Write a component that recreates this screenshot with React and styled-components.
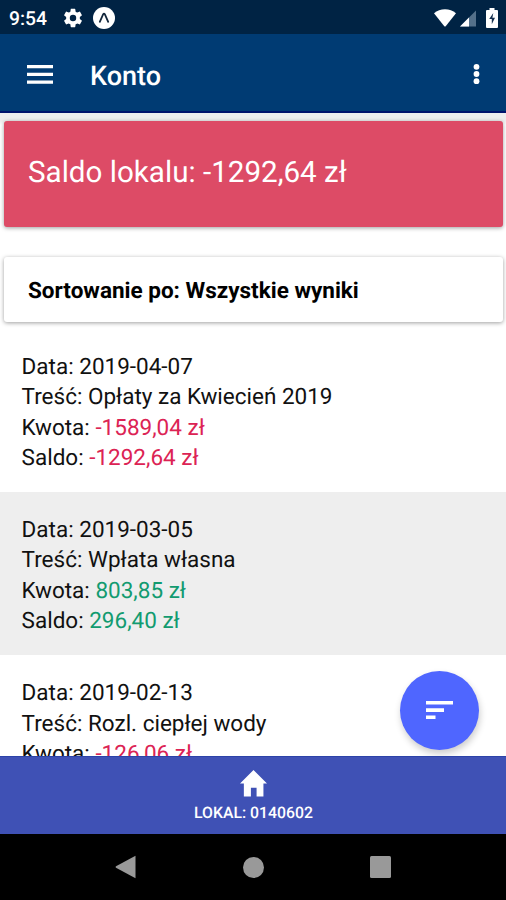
import React from "react";
import styled, { createGlobalStyle } from "styled-components";

const GlobalStyle = createGlobalStyle`
  * { box-sizing: border-box; }
  body { margin: 0; background: #fff; }
`;

const Screen = styled.div`
  display: flex;
  flex-direction: column;
  width: 506px;
  height: 900px;
  overflow: hidden;
  background: #fff;
  color: #111;
  font-family: Roboto, sans-serif;
  text-rendering: geometricPrecision;
`;

const StatusBar = styled.header`
  display: flex;
  align-items: center;
  flex: 0 0 34px;
  padding: 1px 8px 0 9px;
  background: #002344;
  color: #fff;
`;

const Clock = styled.span`
  width: 53px;
  padding-top: 2px;
  font-size: 19.3px;
  font-weight: 500;
  line-height: 30px;
`;

const StatusIcons = styled.div`
  display: flex;
  align-items: center;
  gap: ${(p) => p.$gap}px;
  margin-left: ${(p) => (p.$end ? "auto" : "0")};
`;

const AppBar = styled.div`
  display: flex;
  align-items: center;
  flex: 0 0 79px;
  padding: 3px 26px 0 27px;
  background: #003b73;
  border-bottom: 2px solid #00146c;
  color: #fff;
`;

const Title = styled.h1`
  flex: 1;
  margin: 4px 0 0 37px;
  font-size: 27px;
  font-weight: 500;
  line-height: 32px;
`;

const Content = styled.main`
  position: relative;
  flex: 1;
  min-height: 0;
  overflow: hidden;
  padding-top: 8px;
  background: linear-gradient(#eeeeee 8px, #fff 12px);
`;

const Card = styled.section`
  display: flex;
  align-items: center;
  margin: 0 3px 0 4px;
  padding-left: 24px;
  border-radius: 3px;
  box-shadow: 0 1px 4px rgba(0, 0, 0, 0.38);
`;

const BalanceCard = styled(Card)`
  height: 106px;
  padding-bottom: 2px;
  background: #dd4b66;
  color: #fff;
  font-size: 29.6px;
`;

const SortCard = styled(Card)`
  height: 65px;
  margin-top: 30px;
  padding-top: 2px;
  background: #fff;
  color: #000;
  font-size: 22.5px;
  font-weight: 700;
`;

const List = styled.ul`
  margin: 7px 0 0;
  padding: 0;
  list-style: none;
`;

const Entry = styled.li`
  height: 163.2px;
  padding: 23px 22px 0 21.6px;
  background: ${(p) => (p.$shaded ? "#eeeeee" : "#fff")};
  font-size: 22.5px;
  line-height: 30.3px;
`;

const Amount = styled.span`
  color: ${(p) => (p.$negative ? "#dc2354" : "#129b70")};
`;

const SortButton = styled.button`
  position: absolute;
  right: 27px;
  bottom: 6px;
  display: grid;
  place-items: center;
  width: 79px;
  height: 79px;
  padding: 0;
  border: 0;
  border-radius: 50%;
  background: #4f66ff;
  box-shadow: 1px 4px 7px rgba(0, 0, 0, 0.2);
`;

const BottomTab = styled.footer`
  display: flex;
  flex-direction: column;
  align-items: center;
  flex: 0 0 78px;
  padding: 13px 0 0 1px;
  border-top: 1px solid #2c43a8;
  background: #3f51b5;
  color: #fff;
`;

const TabLabel = styled.span`
  margin-top: 5px;
  font-size: 15.8px;
  font-weight: 500;
  line-height: 22px;
`;

const SystemNav = styled.nav`
  display: flex;
  align-items: center;
  justify-content: space-between;
  flex: 0 0 66px;
  padding: 0 115px;
  background: #000;
`;

const entries = [
  { date: "2019-04-07", text: "Opłaty za Kwiecień 2019", amount: "-1589,04 zł", balance: "-1292,64 zł" },
  { date: "2019-03-05", text: "Wpłata własna", amount: "803,85 zł", balance: "296,40 zł" },
  { date: "2019-02-13", text: "Rozl. ciepłej wody", amount: "-126,06 zł" },
];

const Money = ({ value }) => <Amount $negative={value.startsWith("-")}>{value}</Amount>;

const GearIcon = () => (
  <svg width="22" height="22" viewBox="0 0 24 24" fill="#fff">
    <path d="M19.43 12.98c.04-.32.07-.64.07-.98s-.03-.66-.07-.98l2.11-1.65c.19-.15.24-.42.12-.64l-2-3.46c-.12-.22-.39-.3-.61-.22l-2.49 1c-.52-.4-1.08-.73-1.69-.98l-.38-2.65A.49.49 0 0 0 14 2h-4c-.25 0-.46.18-.49.42l-.38 2.65c-.61.25-1.17.59-1.69.98l-2.49-1c-.23-.09-.49 0-.61.22l-2 3.46c-.13.22-.07.49.12.64l2.11 1.65c-.04.32-.07.65-.07.98s.03.66.07.98l-2.11 1.65c-.19.15-.24.42-.12.64l2 3.46c.12.22.39.3.61.22l2.49-1c.52.4 1.08.73 1.69.98l.38 2.65c.03.24.24.42.49.42h4c.25 0 .46-.18.49-.42l.38-2.65c.61-.25 1.17-.59 1.69-.98l2.49 1c.23.09.49 0 .61-.22l2-3.46c.12-.22.07-.49-.12-.64l-2.11-1.65zM12 15.5A3.5 3.5 0 1 1 12 8.5a3.5 3.5 0 0 1 0 7z" />
  </svg>
);

const ExpoIcon = () => (
  <svg width="22" height="22" viewBox="0 0 22 22">
    <circle cx="11" cy="11" r="11" fill="#fff" />
    <path d="M6.8 14.8 10.2 7.2Q11 6 11.8 7.2L15.2 14.8" fill="none" stroke="#12263b" strokeWidth="1.8" strokeLinecap="round" />
  </svg>
);

const WifiIcon = () => (
  <svg width="22" height="18" viewBox="0 0 22 18">
    <path d="M0 4.2C6-1.2 16-1.2 22 4.2L11.9 17q-.9 1-1.8 0z" fill="#fff" />
  </svg>
);

const SignalIcon = () => (
  <svg width="16" height="18" viewBox="0 0 16 18">
    <path d="M0 17.5 16 1.5v16z" fill="#54708a" />
    <path d="M0 17.5 9 8.5v9z" fill="#fff" />
  </svg>
);

const BatteryIcon = () => (
  <svg width="18" height="20" viewBox="-6 0 18 20">
    <path d="M3.5 0h5v2H11a1 1 0 0 1 1 1v16a1 1 0 0 1-1 1H1a1 1 0 0 1-1-1V3a1 1 0 0 1 1-1h2.5z" fill="#fff" />
    <path d="M7.3 5 3.2 11h2.6v5.2L9 9.8H6.4z" fill="#173150" />
  </svg>
);

const MenuIcon = () => (
  <svg width="26" height="19" viewBox="0 0 26 19" fill="#fff">
    <path d="M0 0h26v3.2H0zM0 7.8h26V11H0zM0 15.5h26v3.2H0z" />
  </svg>
);

const MoreIcon = () => (
  <svg width="7" height="22" viewBox="0 0 7 22" fill="#fff">
    <circle cx="3.5" cy="3.8" r="2.9" />
    <circle cx="3.5" cy="11" r="2.9" />
    <circle cx="3.5" cy="18.2" r="2.9" />
  </svg>
);

const FilterIcon = () => (
  <svg width="27" height="19" viewBox="0 0 27 19" fill="#fff">
    <path d="M0 0h27v3.6H0zM0 7.3h18v3.6H0zM0 14.5h9.5v3.6H0z" />
  </svg>
);

const HomeIcon = () => (
  <svg width="27" height="27" viewBox="0 0 28 27" preserveAspectRatio="none">
    <path d="M14 0 28 13.5h-3.7V26.5h-7.1v-8.8h-5.9v8.8H4v-13H0z" fill="#fff" />
  </svg>
);

const BackIcon = () => (
  <svg width="21" height="24" viewBox="0 0 21 24">
    <path d="M20.5.8v22.4L1 12.8q-1-.8 0-1.6z" fill="#999" />
  </svg>
);

const CircleIcon = () => (
  <svg width="21" height="21" viewBox="0 0 21 21">
    <circle cx="10.5" cy="10.5" r="10.5" fill="#999" />
  </svg>
);

const SquareIcon = () => (
  <svg width="21" height="22" viewBox="0 0 21 22">
    <rect width="21" height="22" rx="1.5" fill="#999" />
  </svg>
);

export default function App() {
  return (
    <Screen>
      <GlobalStyle />
      <StatusBar>
        <Clock>9:54</Clock>
        <StatusIcons $gap={9}>
          <GearIcon />
          <ExpoIcon />
        </StatusIcons>
        <StatusIcons $gap={4} $end>
          <WifiIcon />
          <SignalIcon />
          <BatteryIcon />
        </StatusIcons>
      </StatusBar>
      <AppBar>
        <MenuIcon />
        <Title>Konto</Title>
        <MoreIcon />
      </AppBar>
      <Content>
        <BalanceCard>Saldo lokalu: -1292,64 zł</BalanceCard>
        <SortCard>Sortowanie po: Wszystkie wyniki</SortCard>
        <List>
          {entries.map((e, i) => (
            <Entry key={e.date} $shaded={i % 2 === 1}>
              <div>Data: {e.date}</div>
              <div>Treść: {e.text}</div>
              <div>Kwota: <Money value={e.amount} /></div>
              {e.balance && <div>Saldo: <Money value={e.balance} /></div>}
            </Entry>
          ))}
        </List>
        <SortButton aria-label="Sortowanie">
          <FilterIcon />
        </SortButton>
      </Content>
      <BottomTab>
        <HomeIcon />
        <TabLabel>LOKAL: 0140602</TabLabel>
      </BottomTab>
      <SystemNav>
        <BackIcon />
        <CircleIcon />
        <SquareIcon />
      </SystemNav>
    </Screen>
  );
}
